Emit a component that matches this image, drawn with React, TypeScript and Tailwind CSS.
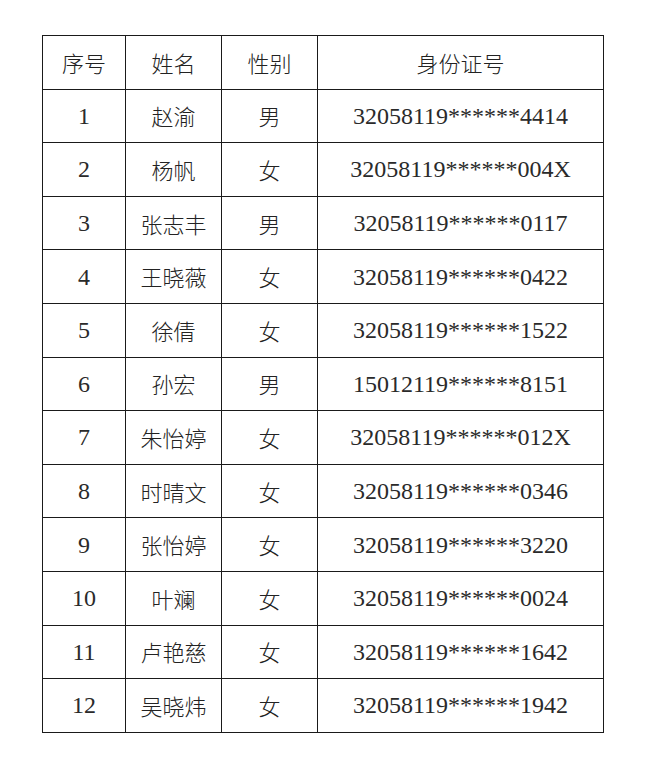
const rows: [string, string, string, string][] = [
  ['1', '赵渝', '男', '32058119******4414'],
  ['2', '杨帆', '女', '32058119******004X'],
  ['3', '张志丰', '男', '32058119******0117'],
  ['4', '王晓薇', '女', '32058119******0422'],
  ['5', '徐倩', '女', '32058119******1522'],
  ['6', '孙宏', '男', '15012119******8151'],
  ['7', '朱怡婷', '女', '32058119******012X'],
  ['8', '时晴文', '女', '32058119******0346'],
  ['9', '张怡婷', '女', '32058119******3220'],
  ['10', '叶斓', '女', '32058119******0024'],
  ['11', '卢艳慈', '女', '32058119******1642'],
  ['12', '吴晓炜', '女', '32058119******1942'],
];

const cell = 'flex items-center justify-center border-r border-b border-[#1a1a1a] h-[53.6px]';
const num = "text-[24px] text-[#2a2a2a] font-['Liberation_Serif',serif]";
const han = "text-[22px] font-['Noto_Sans_CJK_SC',sans-serif] font-light";

export default function App() {
  return (
    <div className="min-h-[777px] w-[645px] bg-white pt-[35px] pl-[42px] text-[#222]">
      <div className="grid w-[562px] grid-cols-[83px_96px_96px_1fr] border-l border-t border-[#1a1a1a]">
        <div className={`${cell} ${han}`}>序号</div>
        <div className={`${cell} ${han}`}>姓名</div>
        <div className={`${cell} ${han}`}>性别</div>
        <div className={`${cell} ${han}`}>身份证号</div>
        {rows.map(([n, name, sex, id]) => (
          <div key={n} className="contents">
            <div className={`${cell} ${num}`}>{n}</div>
            <div className={`${cell} ${han}`}>{name}</div>
            <div className={`${cell} ${han}`}>{sex}</div>
            <div className={`${cell} ${num}`}>{id}</div>
          </div>
        ))}
      </div>
    </div>
  );
}
